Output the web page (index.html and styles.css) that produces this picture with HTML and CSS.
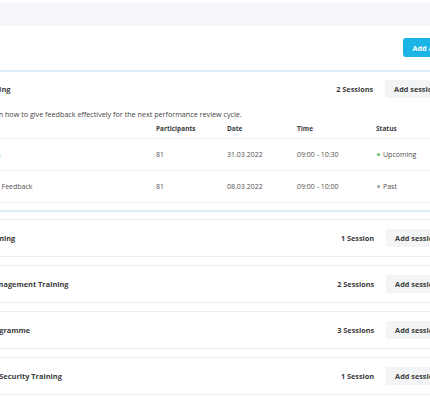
FILE: index.html
```html
<!DOCTYPE html>
<html lang="en">
<head>
    <meta charset="UTF-8">
    <meta name="viewport" content="width=device-width, initial-scale=1.0">
    <title>Trainings</title>
    <link rel="stylesheet" href="styles.css">
</head>
<body>
    <div class="topbar"></div>

    <div class="page">
        <div class="toolbar">
            <button class="btn-primary">Add a training</button>
        </div>

        <!-- Expanded training -->
        <div class="card card-open">
            <div class="card-head">
                <div class="card-title">Feedback Training</div>
                <div class="card-count">2 Sessions</div>
                <button class="btn-light">Add session</button>
            </div>
            <div class="card-body">
                <p class="card-desc">Mentors will learn how to give feedback effectively for the next performance review cycle.</p>
                <div class="sessions">
                    <div class="row row-head">
                        <div>Session</div>
                        <div>Participants</div>
                        <div>Date</div>
                        <div>Time</div>
                        <div>Status</div>
                    </div>
                    <div class="row">
                        <div>Feedback Session</div>
                        <div>81</div>
                        <div>31.03.2022</div>
                        <div>09:00 - 10:30</div>
                        <div><span class="dot dot-green"></span>Upcoming</div>
                    </div>
                    <div class="row">
                        <div>Practice Round 1: Feedback</div>
                        <div>81</div>
                        <div>08.03.2022</div>
                        <div>09:00 - 10:00</div>
                        <div><span class="dot"></span>Past</div>
                    </div>
                </div>
            </div>
        </div>

        <!-- Collapsed trainings -->
        <div class="card">
            <div class="card-head">
                <div class="card-title">Leadership Training</div>
                <div class="card-count">1 Session</div>
                <button class="btn-light">Add session</button>
            </div>
        </div>
        <div class="card">
            <div class="card-head">
                <div class="card-title">Compliance Management Training</div>
                <div class="card-count">2 Sessions</div>
                <button class="btn-light">Add session</button>
            </div>
        </div>
        <div class="card">
            <div class="card-head">
                <div class="card-title">Mentorship Programme</div>
                <div class="card-count">3 Sessions</div>
                <button class="btn-light">Add session</button>
            </div>
        </div>
        <div class="card">
            <div class="card-head">
                <div class="card-title">Employee Data Security Training</div>
                <div class="card-count">1 Session</div>
                <button class="btn-light">Add session</button>
            </div>
        </div>
    </div>
</body>
</html>
```

FILE: styles.css
```css
body {
    margin: 0;
    font-family: "Open Sans", "DejaVu Sans", sans-serif;
    color: #505050;
    background: #fff;
    overflow: hidden;
}

.topbar {
    height: 23px;
    margin-top: 3px;
    background: #f4f6f9;
}

/* page is wider than the window, both sides are cut */
.page {
    margin-left: -70px;
    width: 530px;
}

.toolbar {
    display: flex;
    justify-content: flex-end;
    margin-right: -13px;
    padding: 12px 0 13px;
}

.btn-primary {
    height: 19px;
    padding: 0 9px;
    border: 0;
    border-radius: 3px;
    background: #1ab4e5;
    color: #fff;
    font: 700 7.3px "Open Sans", sans-serif;
}

.btn-light {
    height: 18px;
    padding: 0 9px;
    border: 0;
    border-radius: 3px;
    background: #f2f4f6;
    color: #3c3c3c;
    font: 700 7.3px "Open Sans", sans-serif;
}

.card {
    border: 1px solid #eaedf0;
    margin-bottom: 8px;
    background: #fff;
}

.card-open {
    border: 2px solid #dcedf6;
    margin-bottom: 7px;
}

.card-head {
    display: flex;
    align-items: center;
    padding: 9px 12px 9px 11px;
}

.card-open .card-head {
    padding-top: 8px;
}

.card-title {
    flex: 1;
    font-size: 7.4px;
    font-weight: 700;
    color: #3c3c3c;
    white-space: nowrap;
}

.card-count {
    margin-right: 12px;
    font-size: 7.3px;
    font-weight: 700;
    color: #3c3c3c;
}

.card-body {
    padding: 0 12px 7px 11px;
}

.card-desc {
    margin: 0;
    padding-top: 1px;
    font-size: 7.2px;
    line-height: 12px;
    color: #444;
}

.row {
    display: grid;
    grid-template-columns: 213px 71px 70px 79px 1fr;
    padding: 10px 0;
    border-bottom: 1px solid #edf0f2;
    font-size: 7px;
    line-height: 11px;
    white-space: nowrap;
}

.row-head {
    padding: 3px 0 4px;
    font-size: 6.5px;
    font-weight: 700;
    color: #3c3c3c;
}

.dot {
    display: inline-block;
    width: 3px;
    height: 3px;
    margin: 0 3px 1px 1px;
    border-radius: 50%;
    background: #9a9ea3;
    vertical-align: middle;
}

.dot-green {
    background: #5cc46b;
}
```
